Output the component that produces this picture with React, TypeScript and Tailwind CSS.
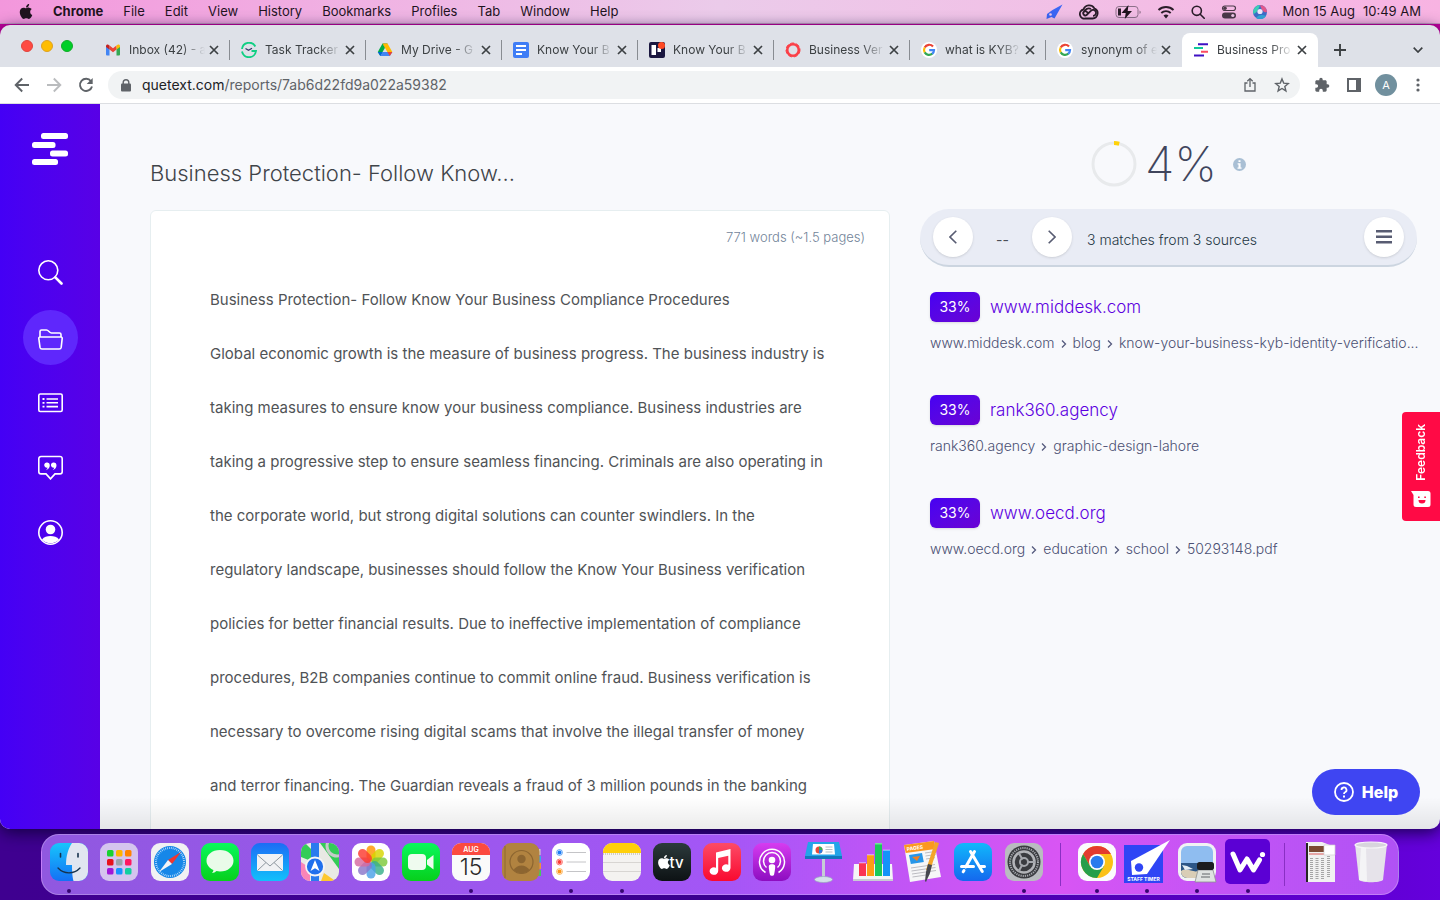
import type { ReactNode } from "react";

const MENU_ITEMS = ["File", "Edit", "View", "History", "Bookmarks", "Profiles", "Tab", "Window", "Help"];

const DOCUMENT_LINES = [
  "Business Protection- Follow Know Your Business Compliance Procedures",
  "Global economic growth is the measure of business progress. The business industry is",
  "taking measures to ensure know your business compliance. Business industries are",
  "taking a progressive step to ensure seamless financing. Criminals are also operating in",
  "the corporate world, but strong digital solutions can counter swindlers. In the",
  "regulatory landscape, businesses should follow the Know Your Business verification",
  "policies for better financial results. Due to ineffective implementation of compliance",
  "procedures, B2B companies continue to commit online fraud. Business verification is",
  "necessary to overcome rising digital scams that involve the illegal transfer of money",
  "and terror financing. The Guardian reveals a fraud of 3 million pounds in the banking",
];

interface Source {
  percent: string;
  site: string;
  path: string[];
}

const SOURCES: Source[] = [
  {
    percent: "33%",
    site: "www.middesk.com",
    path: ["www.middesk.com", "blog", "know-your-business-kyb-identity-verificatio..."],
  },
  { percent: "33%", site: "rank360.agency", path: ["rank360.agency", "graphic-design-lahore"] },
  { percent: "33%", site: "www.oecd.org", path: ["www.oecd.org", "education", "school", "50293148.pdf"] },
];

/* ---------- menu bar ---------- */

function AppleLogo({ className }: { className: string }) {
  return (
    <svg viewBox="0 0 384 512" fill="currentColor" className={className} aria-hidden="true">
      <path d="M318.7 268.7c-.2-36.7 16.4-64.4 50-84.8-18.8-26.9-47.2-41.7-84.7-44.6-35.5-2.8-74.3 20.7-88.5 20.7-15 0-49.4-19.7-76.4-19.7C63.3 141.2 4 184.8 4 273.5q0 39.3 14.4 81.2c12.8 36.7 59 126.7 107.2 125.2 25.2-.6 43-17.9 75.8-17.9 31.8 0 48.3 17.9 76.4 17.9 48.6-.7 90.4-82.5 102.6-119.3-65.2-30.7-61.7-90-61.7-91.9zm-56.6-164.2c27.3-32.4 24.8-61.9 24-72.5-24.1 1.4-52 16.4-67.9 34.9-17.5 19.8-27.8 44.3-25.6 71.9 26.1 2 49.9-11.4 69.5-34.3z" />
    </svg>
  );
}

function MenuBar() {
  return (
    <header className="flex h-6 shrink-0 items-center justify-between border-b border-[#c69bc0] bg-linear-to-r from-[#f397dc] via-[#ebcbea] to-[#f8b3e2] px-[19px] text-[13px] text-[#1f141e]">
      <nav className="flex items-center gap-5">
        <AppleLogo className="h-[17px] w-[14px]" />
        <span className="font-bold">Chrome</span>
        {MENU_ITEMS.map((item) => (
          <span key={item}>{item}</span>
        ))}
      </nav>
      <div className="flex items-center gap-4">
        <svg viewBox="0 0 18 16" className="h-4 w-[18px]">
          <path d="M17.500.500 9.500 14.500l-3-1.500-5 2 .500-5 5.500-4z" fill="#3b66f5" />
          <circle cx="5.500" cy="10.500" r="1.300" fill="#efc9ea" />
        </svg>
        <svg viewBox="0 0 20 16" className="h-4 w-5" fill="none" stroke="#2a1d29">
          <path d="M6.500 14.500h7a5.300 5.300 0 0 0 1.800-10.200A6 6 0 0 0 4.500 5.500a4.600 4.600 0 0 0 2 9z" strokeWidth="1.800" />
          <path d="M14 11.800a3 3 0 1 0-2.200-5L7.600 11a2.100 2.100 0 1 1 .2-3.200l1 1M5 8a5 5 0 0 1 7-3" strokeWidth="1.800" />
        </svg>
        <svg viewBox="0 0 26 14" className="h-[14px] w-[26px]">
          <rect x="1" y="1.500" width="22" height="11" rx="3" fill="none" stroke="#8d718a" />
          <path d="M24.500 5.500v3.500c1-.4 1.200-1.200 1.200-1.700s-.2-1.400-1.200-1.800z" fill="#8d718a" />
          <path d="M3 3.500h3v7H3z" fill="#2a1d29" />
          <path d="M13.500 0 6.500 8h4.200L9.800 14l7.200-8h-4.300z" fill="#1f141e" />
        </svg>
        <svg viewBox="0 0 18 14" className="h-[14px] w-[18px]" fill="none" stroke="#2a1d29" strokeWidth="1.900">
          <path d="M1.500 5a10.800 10.800 0 0 1 15 0M4.300 8a6.800 6.800 0 0 1 9.400 0" />
          <path d="M9 13.500 6.500 10.600a3.700 3.700 0 0 1 5 0z" fill="#2a1d29" stroke="none" />
        </svg>
        <svg viewBox="0 0 14 14" className="size-[14px]" fill="none" stroke="#2a1d29" strokeWidth="1.600">
          <circle cx="5.800" cy="5.800" r="4.600" />
          <path d="m9.200 9.200 4 4" strokeLinecap="round" />
        </svg>
        <svg viewBox="0 0 16 14" className="h-[14px] w-4">
          <rect x="1.500" y="1" width="13" height="4.500" rx="2.250" fill="none" stroke="#4b3a49" strokeWidth="1.200" />
          <circle cx="4" cy="3.250" r="1.800" fill="#4b3a49" />
          <rect x="1" y="7.500" width="14" height="6" rx="3" fill="#4b3a49" />
          <circle cx="11.800" cy="10.500" r="1.600" fill="#efc9ea" />
        </svg>
        <svg viewBox="0 0 14 14" className="size-[14px]">
          <circle cx="7" cy="7" r="7" fill="#3d6fc9" />
          <path d="M7 0a7 7 0 0 0-6.500 9C3 8 5 6 7 0z" fill="#3ccfb4" />
          <path d="M7 0a7 7 0 0 1 7 7c-3 1-5-1-7-7z" fill="#e2568c" />
          <path d="M3 13c2-3 6-4 10-2a7 7 0 0 1-10 2z" fill="#33a9da" />
          <circle cx="7" cy="6.500" r="2.600" fill="#f3e9fb" />
        </svg>
        <span className="flex gap-2">
          <span>Mon 15 Aug</span>
          <span>10:49 AM</span>
        </span>
      </div>
    </header>
  );
}

/* ---------- browser chrome ---------- */

function GoogleIcon() {
  return (
    <svg viewBox="0 0 16 16" className="size-4 shrink-0">
      <circle cx="8" cy="8" r="8" fill="#fff" />
      <g fill="none" strokeWidth="2.200">
        <path d="M12 4.500A5 5 0 0 0 3.700 5.600" stroke="#ea4335" />
        <path d="M3.700 5.500a5 5 0 0 0 0 5" stroke="#fbbc05" />
        <path d="M3.700 10.400a5 5 0 0 0 7.600 1.300" stroke="#34a853" />
        <path d="M8.200 8.200H13a5 5 0 0 1-1.800 3.700" stroke="#4285f4" />
      </g>
    </svg>
  );
}

const TABS: { title: string; icon: ReactNode }[] = [
  {
    title: "Inbox (42) - a",
    icon: (
      <svg viewBox="0 0 16 16" className="size-4 shrink-0">
        <path d="M1 3.500 4.500 6v7.500H2a1 1 0 0 1-1-1z" fill="#4285f4" />
        <path d="M15 3.500 11.500 6v7.500H14a1 1 0 0 0 1-1z" fill="#34a853" />
        <path d="M4.500 3.500 8 6.200l3.500-2.700v4L8 10.200 4.500 7.500z" fill="#ea4335" />
        <path d="M1 4.200c0-1.700 1.700-2 2.600-1.300l.9.700v4L1 5z" fill="#c5221f" />
        <path d="M15 4.200c0-1.700-1.700-2-2.600-1.300l-.9.700v4L15 5z" fill="#fbbc04" />
      </svg>
    ),
  },
  {
    title: "Task Tracker",
    icon: (
      <svg viewBox="0 0 16 16" className="size-4 shrink-0" fill="none">
        <path d="M14.300 4.500A7.100 7.100 0 0 0 1 7" stroke="#10cf83" strokeWidth="1.900" />
        <path d="M1 9.500a7.100 7.100 0 0 0 14-.5h-4.500" stroke="#10cf83" strokeWidth="1.900" />
        <path d="m4.500 6.500 3 1.800 3.500-2" stroke="#38376b" strokeWidth="1.300" />
      </svg>
    ),
  },
  {
    title: "My Drive - G",
    icon: (
      <svg viewBox="0 0 16 16" className="size-4 shrink-0">
        <path d="M5.500 1.500h5L8 5.800z" fill="#188038" />
        <path d="M5.500 1.500 8 5.800 3.300 14 .8 10z" fill="#00ac47" />
        <path d="M10.500 1.500 15.300 10h-5L5.600 1.500z" fill="#ffba00" />
        <path d="M5.600 10h9.700l-2.500 4H3.300z" fill="#4285f4" />
        <path d="m.8 10 2.500 4 2.300-4z" fill="#0066da" />
        <path d="M10.300 10h5l-2.500 4z" fill="#ea4335" />
      </svg>
    ),
  },
  {
    title: "Know Your B",
    icon: (
      <svg viewBox="0 0 16 16" className="size-4 shrink-0">
        <rect width="16" height="16" rx="2" fill="#3f7df6" />
        <path d="M3 3h10v2H3zM3 7h10v2H3zM3 11h6v2H3z" fill="#fff" />
      </svg>
    ),
  },
  {
    title: "Know Your B",
    icon: (
      <svg viewBox="0 0 16 16" className="size-4 shrink-0">
        <rect width="16" height="16" rx="2" fill="#1b1740" />
        <path d="M2.500 3H7v10H2.500zM8.500 6h3.500v4H8.500z" fill="#fff" />
        <circle cx="12.500" cy="3.500" r="3.500" fill="#ff4a24" />
      </svg>
    ),
  },
  {
    title: "Business Ver",
    icon: (
      <svg viewBox="0 0 16 16" className="size-4 shrink-0" fill="none" stroke="#fb4048">
        <circle cx="8" cy="8" r="5.800" strokeWidth="2.600" />
        <circle cx="8" cy="8" r="7" strokeWidth="1" strokeDasharray="4 2" />
      </svg>
    ),
  },
  { title: "what is KYB?", icon: <GoogleIcon /> },
  { title: "synonym of e", icon: <GoogleIcon /> },
];

function CloseIcon() {
  return (
    <svg viewBox="0 0 10 10" className="size-[10px]" stroke="#3c4043" strokeWidth="1.700">
      <path d="m1 1 8 8M9 1 1 9" />
    </svg>
  );
}

function TabBody({ title, icon }: { title: string; icon: ReactNode }) {
  return (
    <>
      {icon}
      <span className="ml-2 min-w-0 flex-1 overflow-hidden mask-r-from-70% mask-r-to-100% whitespace-nowrap">{title}</span>
      <button type="button" aria-label={`Close ${title}`} className="ml-1">
        <CloseIcon />
      </button>
    </>
  );
}

function TabStrip() {
  return (
    <div className="flex h-[42px] shrink-0 items-end bg-[#dee1e8] text-xs text-[#3c4043]">
      <div className="flex h-[42px] w-[94px] shrink-0 items-center gap-2 pl-[21px]">
        <span className="size-3 rounded-full border border-[#e0443e] bg-[#ff4a42]" />
        <span className="size-3 rounded-full border border-[#dea123] bg-[#ffbd00]" />
        <span className="size-3 rounded-full border border-[#12ac28] bg-[#00cf28]" />
      </div>
      {TABS.map((tab, index) => (
        <div key={index} className="flex h-[34px] w-[136px] min-w-0 items-center pl-[11px]">
          <TabBody {...tab} />
          <span className={`ml-[10px] h-5 w-px ${index < TABS.length - 1 ? "bg-[#888c92]" : "bg-transparent"}`} />
        </div>
      ))}
      <div className="flex h-[34px] w-[136px] min-w-0 items-center rounded-t-lg bg-white px-[11px]">
        <TabBody
          title="Business Pro"
          icon={
            <svg viewBox="0 0 16 16" className="size-4 shrink-0">
              <path d="M5 1.200h10v2H5z" fill="#3f10c4" />
              <path d="M1 5h9v2H1z" fill="#10c79b" />
              <path d="M8 8.800h7v2H8z" fill="#fb4b5f" />
              <path d="M1 12.600h10v2H1z" fill="#3f10c4" />
            </svg>
          }
        />
      </div>
      <button type="button" aria-label="New tab" className="ml-4 flex h-[34px] items-center">
        <svg viewBox="0 0 12 12" className="size-3" stroke="#3c4043" strokeWidth="1.900">
          <path d="M6 0v12M0 6h12" />
        </svg>
      </button>
      <button type="button" aria-label="Search tabs" className="mr-[17px] ml-auto flex h-[34px] items-center">
        <svg viewBox="0 0 10 6" className="h-[6px] w-[10px]" fill="none" stroke="#3c4043" strokeWidth="1.700">
          <path d="m.7.7 4.300 4.300L9.300.7" />
        </svg>
      </button>
    </div>
  );
}

function Toolbar() {
  return (
    <div className="flex h-[37px] shrink-0 items-center border-b border-[#dcdee2] bg-white pr-5 pl-[14px]">
      <div className="flex shrink-0 gap-4">
        <button type="button" aria-label="Back">
          <svg viewBox="0 0 16 16" className="size-4" fill="none" stroke="#5f6368" strokeWidth="1.900">
            <path d="M15 8H2M8.200 1.500 1.700 8l6.500 6.500" />
          </svg>
        </button>
        <button type="button" aria-label="Forward">
          <svg viewBox="0 0 16 16" className="size-4" fill="none" stroke="#babcbe" strokeWidth="1.900">
            <path d="M1 8h13M7.800 1.500 14.300 8l-6.500 6.500" />
          </svg>
        </button>
        <button type="button" aria-label="Reload">
          <svg viewBox="0 0 16 16" className="size-4" fill="none" stroke="#5f6368" strokeWidth="1.900">
            <path d="M13 4.200A6.100 6.100 0 1 0 14 9.500" />
            <path d="M14.700 1v6H8.700z" fill="#5f6368" stroke="none" />
          </svg>
        </button>
      </div>
      <div className="ml-[14px] flex h-7 min-w-0 flex-1 items-center rounded-full bg-[#f1f3f4] pr-[10px] pl-[13px]">
        <svg viewBox="0 0 10 13" className="h-[13px] w-[10px]">
          <path d="M2.200 5.500V3.600a2.800 2.800 0 0 1 5.600 0v1.900" fill="none" stroke="#5f6368" strokeWidth="1.400" />
          <rect y="4.500" width="10" height="8" rx="1" fill="#5f6368" />
        </svg>
        <p className="ml-[11px] flex-1 truncate text-sm text-[#5f6368]">
          <span className="text-[#202124]">quetext.com</span>/reports/7ab6d22fd9a022a59382
        </p>
        <button type="button" aria-label="Share">
          <svg viewBox="0 0 14 16" className="h-4 w-[14px]" fill="none" stroke="#5f6368" strokeWidth="1.300">
            <path d="M4.500 6H2v8h10V6H9.500M7 10V2M4.300 4.300 7 1.600l2.700 2.700" />
          </svg>
        </button>
        <button type="button" aria-label="Bookmark" className="ml-[17px]">
          <svg viewBox="0 0 16 16" className="size-4" fill="none" stroke="#5f6368" strokeWidth="1.400">
            <path d="m8 1.900 1.700 4.200 4.600.4-3.500 3 1.100 4.400L8 11.500l-3.900 2.400 1.100-4.400-3.500-3 4.600-.4z" />
          </svg>
        </button>
      </div>
      <div className="flex shrink-0 items-center pl-[14px]">
        <button type="button" aria-label="Extensions">
          <svg viewBox="0 0 24 24" className="size-4" fill="#5f6368">
            <path d="M20.500 11H19V7c0-1.100-.9-2-2-2h-4V3.500a2.500 2.500 0 0 0-5 0V5H4c-1.100 0-2 .9-2 2v3.800h1.500a2.700 2.700 0 0 1 0 5.400H2V20c0 1.100.9 2 2 2h3.800v-1.500a2.700 2.700 0 0 1 5.400 0V22H17c1.100 0 2-.9 2-2v-4h1.500a2.500 2.500 0 0 0 0-5z" />
          </svg>
        </button>
        <button type="button" aria-label="Side panel" className="ml-[17px]">
          <svg viewBox="0 0 14 14" className="size-[14px]">
            <path d="M0 0h14v14H0zM2 2v10h7V2z" fill="#5f6368" fillRule="evenodd" />
          </svg>
        </button>
        <button type="button" aria-label="Profile" className="ml-[14px] size-[22px] rounded-full bg-[#71909e] text-[11px] text-white">
          A
        </button>
        <button type="button" aria-label="More" className="ml-[19px]">
          <svg viewBox="0 0 4 14" className="h-[14px] w-1" fill="#5f6368">
            <circle cx="2" cy="2" r="1.600" />
            <circle cx="2" cy="7" r="1.600" />
            <circle cx="2" cy="12" r="1.600" />
          </svg>
        </button>
      </div>
    </div>
  );
}

/* ---------- report page ---------- */

const NAV_ICONS: { label: string; icon: ReactNode; active?: boolean }[] = [
  {
    label: "Search",
    icon: (
      <>
        <circle cx="10.300" cy="10.300" r="9.500" />
        <path d="m17.300 17.300 6.200 6.200" strokeWidth="2.600" strokeLinecap="round" />
      </>
    ),
  },
  {
    label: "Folders",
    active: true,
    icon: (
      <>
        <path d="M2 12V6.500A1.500 1.500 0 0 1 3.500 5h5c2 0 3 3 5 3h8a1.500 1.500 0 0 1 1.500 1.500V12" />
        <path d="M2 12h21a1.200 1.200 0 0 1 1.200 1.400l-1 9a2 2 0 0 1-2 1.600H4a2 2 0 0 1-2-1.600l-1.200-9A1.200 1.200 0 0 1 2 12z" />
      </>
    ),
  },
  {
    label: "Reports",
    icon: (
      <>
        <rect x=".8" y="4" width="23.400" height="17.500" rx="1.500" />
        <path d="M8.500 9h11.500M8.500 12.800h11.500M8.500 16.600h11.500" />
        <path d="M4.500 9h2M4.500 12.800h2M4.500 16.600h2" strokeWidth="1.800" />
      </>
    ),
  },
  {
    label: "Citations",
    icon: (
      <>
        <path d="M3 1.500h19A2.200 2.200 0 0 1 24.200 3.700v13a2.200 2.200 0 0 1-2.200 2.200h-5l-4.500 5-4.500-5H3a2.200 2.200 0 0 1-2.200-2.200v-13A2.200 2.200 0 0 1 3 1.500z" />
        <path
          d="M9 7.500a2.600 2.600 0 1 0 .5 5.100c-.1 1-.7 1.800-1.600 2.600 2.700-.8 3.900-2.900 3.900-5.200A2.600 2.600 0 0 0 9 7.500zM15.700 7.500a2.600 2.600 0 1 0 .5 5.100c-.1 1-.7 1.800-1.600 2.600 2.700-.8 3.900-2.900 3.900-5.200a2.600 2.600 0 0 0-2.800-2.500z"
          fill="#fff"
          stroke="none"
        />
      </>
    ),
  },
  {
    label: "Account",
    icon: (
      <>
        <circle cx="12.500" cy="12.500" r="11.700" />
        <circle cx="12.500" cy="9.500" r="4.800" fill="#fff" stroke="none" />
        <path d="M4 19.500c2-2.600 5-3.500 8.500-3.500s6.500.9 8.500 3.500a11.500 11.500 0 0 1-17 0z" fill="#fff" stroke="none" />
      </>
    ),
  },
];

function Sidebar() {
  return (
    <aside className="flex w-[100px] shrink-0 flex-col items-center bg-linear-to-r from-[#4400f5] to-[#5800e6] pt-[29px]">
      <svg viewBox="0 0 36 32" className="h-8 w-9" fill="#fff">
        <rect x="9" width="27" height="6" rx="2.500" />
        <rect y="9" width="23.500" height="6" rx="2.500" />
        <rect x="18" y="17.500" width="18" height="6" rx="2.500" />
        <rect y="26" width="26" height="6" rx="2.500" />
      </svg>
      <nav className="mt-20 flex flex-col gap-[10px]">
        {NAV_ICONS.map(({ label, icon, active }) => (
          <button
            key={label}
            type="button"
            aria-label={label}
            className={`flex size-[55px] items-center justify-center rounded-full ${active ? "bg-[#5f27fc]" : ""}`}
          >
            <svg viewBox="0 0 25 25" className="size-[25px]" fill="none" stroke="#fff" strokeWidth="1.600">
              {icon}
            </svg>
          </button>
        ))}
      </nav>
    </aside>
  );
}

function DocumentColumn() {
  return (
    <section className="min-w-0 pt-[53px]">
      <h1 className="truncate text-[22px] leading-8 font-light text-[#3f4449]">Business Protection- Follow Know...</h1>
      <article className="mt-[21px] rounded-md border border-[#e6eef0] bg-white pt-4 pb-10">
        <p className="pr-6 text-right text-[13px] leading-5 font-light text-[#728499]">771 words (~1.5 pages)</p>
        <div className="mt-[26px] pl-[59px] text-[15px] leading-[54px] whitespace-nowrap text-[#505356]">
          {DOCUMENT_LINES.map((line) => (
            <p key={line}>{line}</p>
          ))}
        </div>
      </article>
    </section>
  );
}

function SourceItem({ percent, site, path }: Source) {
  return (
    <li>
      <div className="flex items-center gap-[10px]">
        <span className="flex h-[30px] w-[50px] items-center justify-center rounded-md bg-linear-to-br from-[#4600f2] to-[#6a00d4] text-sm text-white shadow-sm">
          {percent}
        </span>
        <a href="#source" className="text-[17px] leading-7 font-light text-[#5c00e0]">
          {site}
        </a>
      </div>
      <p className="mt-[11px] text-sm font-light whitespace-nowrap text-[#4b5073]">
        {path.map((part, index) => (
          <span key={part}>
            {index > 0 ? (
              <svg viewBox="0 0 6 8" className="mx-[6px] mb-px inline h-2 w-[6px]" fill="none" stroke="#555a7d" strokeWidth="1.300">
                <path d="m1 .5 3.500 3.500L1 7.500" />
              </svg>
            ) : null}
            {part}
          </span>
        ))}
      </p>
    </li>
  );
}

const ROUND_BUTTON = "flex size-10 shrink-0 items-center justify-center rounded-full bg-white shadow-sm";

function MatchesColumn() {
  return (
    <section className="min-w-0 pt-[30px]">
      <div className="flex h-[60px] items-center justify-center">
        <svg viewBox="0 0 46 46" className="size-[46px]" fill="none" strokeWidth="3">
          <circle cx="23" cy="23" r="21" stroke="#e8eaec" />
          <path d="M23 2a21 21 0 0 1 5.200.7" stroke="#ffd20a" strokeWidth="4" />
        </svg>
        <p className="ml-2 text-5xl leading-[60px] font-extralight text-[#40455c]">4%</p>
        <svg viewBox="0 0 13 13" className="ml-4 size-[13px]">
          <circle cx="6.500" cy="6.500" r="6.500" fill="#a9bfd4" />
          <path d="M5.500 2.200h2v1.900h-2zM4.600 5.200h3v4.200h1v1.300H4.500V9.400h1V6.500h-.9z" fill="#fff" />
        </svg>
      </div>
      <div className="mt-[15px] flex h-[58px] items-center rounded-full border-b-2 border-[#ccd5e0] bg-[#e9ecf5] px-[13px] text-sm">
        <button type="button" aria-label="Previous match" className={ROUND_BUTTON}>
          <svg viewBox="0 0 8 14" className="h-[14px] w-2" fill="none" stroke="#585c72" strokeWidth="1.600">
            <path d="M7.300.7 1 7l6.300 6.300" />
          </svg>
        </button>
        <span className="w-[59px] pt-[6px] text-center text-[#4b4f57]">--</span>
        <button type="button" aria-label="Next match" className={ROUND_BUTTON}>
          <svg viewBox="0 0 8 14" className="h-[14px] w-2" fill="none" stroke="#585c72" strokeWidth="1.600">
            <path d="M.7.7 7 7 .7 13.300" />
          </svg>
        </button>
        <span className="ml-[15px] flex-1 pt-[6px] font-light text-[#243744]">3 matches from 3 sources</span>
        <button type="button" aria-label="Menu" className={ROUND_BUTTON}>
          <svg viewBox="0 0 16 14" className="h-[14px] w-4" fill="#585c72">
            <path d="M0 0h16v2.500H0zM0 5.500h16V8H0zM0 11h16v2.500H0z" />
          </svg>
        </button>
      </div>
      <ul className="mt-[25px] flex flex-col gap-[42px] pl-[10px]">
        {SOURCES.map((source) => (
          <SourceItem key={source.site} {...source} />
        ))}
      </ul>
    </section>
  );
}

function ReportPage() {
  return (
    <div className="relative flex min-h-0 flex-1 overflow-hidden bg-[#f8f9fc]">
      <Sidebar />
      <main className="grid min-w-0 flex-1 grid-cols-[minmax(0,740fr)_minmax(0,497fr)] gap-[30px] overflow-hidden pr-[23px] pl-[50px]">
        <DocumentColumn />
        <MatchesColumn />
      </main>
      <div className="pointer-events-none absolute right-0 bottom-0 left-[100px] h-8 bg-linear-to-b from-transparent to-black/8" />
      <button
        type="button"
        className="absolute top-[308px] right-0 flex h-[109px] w-[38px] flex-col items-center justify-between rounded-l-sm bg-[#ff0a45] pt-3 pb-[14px] text-xs font-semibold text-white"
      >
        <span className="rotate-180 [writing-mode:vertical-rl]">Feedback</span>
        <svg viewBox="0 0 20 16" className="h-4 w-5">
          <path d="M0 0h17a2.500 2.500 0 0 1 2.500 2.500v11A2.500 2.500 0 0 1 17 16H5a2.500 2.500 0 0 1-2.500-2.500V4z" fill="#fff" />
          <path d="M7 5.500h1.600v1.600H7zM13.300 5.500h1.600v1.600h-1.600zM7.500 9h7a3.500 3.500 0 0 1-7 0z" fill="#ff0a45" />
        </svg>
      </button>
      <button
        type="button"
        className="absolute right-5 bottom-[14px] flex h-[46px] w-[108px] items-center justify-center gap-2 rounded-full bg-[#3f45f2] text-base font-extrabold text-white"
      >
        <svg viewBox="0 0 20 20" className="size-5" fill="none" stroke="#fff" strokeWidth="1.800">
          <circle cx="10" cy="10" r="9" />
          <path d="M7.500 8a2.500 2.500 0 1 1 3.600 2.200c-.8.400-1.100.8-1.100 1.700" />
          <path d="M9 13.500h2v2H9z" fill="#fff" stroke="none" />
        </svg>
        Help
      </button>
    </div>
  );
}

/* ---------- dock ---------- */

function Tile({ fill }: { fill: string }) {
  return <rect width="38" height="38" rx="9" fill={fill} />;
}

interface DockApp {
  name: string;
  running?: boolean;
  art: ReactNode;
}

const LAUNCHPAD_COLORS = [
  "#19d22e", "#ffb300", "#ff8300",
  "#e8101c", "#9aa3ab", "#ff1760",
  "#a017d8", "#1793ff", "#13cfa0",
];

const PETAL_COLORS = ["#ff9500", "#d8d600", "#7dc93a", "#38b08a", "#4ba1e8", "#8a76c9", "#d66aa0", "#fb3b30"];

const DOCK_MAIN: DockApp[] = [
  {
    name: "Finder",
    running: true,
    art: (
      <>
        <Tile fill="url(#finder)" />
        <path d="M22 0h7a9 9 0 0 1 9 9v20a9 9 0 0 1-9 9h-5.500c-1-4-1.500-8-1.500-16h-6c0-9 2-16 6-22z" fill="#e1e6f0" />
        <path d="M10.500 10.500v3.500M28 10.500v3.500" stroke="#17324d" strokeWidth="1.600" strokeLinecap="round" />
        <path d="M8 25c6 6.500 16 6.500 22 0" fill="none" stroke="#17324d" strokeWidth="1.300" strokeLinecap="round" />
      </>
    ),
  },
  {
    name: "Launchpad",
    art: (
      <>
        <Tile fill="#d5c4ee" />
        {LAUNCHPAD_COLORS.map((color, i) => (
          <rect key={color} x={7 + (i % 3) * 9} y={7 + Math.floor(i / 3) * 9} width="6.500" height="6.500" rx="1.500" fill={color} />
        ))}
      </>
    ),
  },
  {
    name: "Safari",
    art: (
      <>
        <Tile fill="#f1f1f3" />
        <circle cx="19" cy="19" r="16" fill="#1687e8" />
        <circle cx="19" cy="19" r="14" fill="none" stroke="#cfe9ff" strokeWidth="2" strokeDasharray=".7 1.200" />
        <path d="m30 9-9 12-4-4z" fill="#f2362f" />
        <path d="M8 29 17 17l4 4z" fill="#f5f5f7" />
      </>
    ),
  },
  {
    name: "Messages",
    art: (
      <>
        <Tile fill="url(#green)" />
        <path d="M19 7c8 0 13.500 4.800 13.500 10.700S27 28.500 19 28.500c-1.200 0-2.500-.2-3.500-.4-1.200 1.200-2.900 2-4.700 2 .9-.9 1.500-2 1.600-3.200C8 25 5.500 21.600 5.500 17.700 5.500 11.800 11 7 19 7z" fill="#e9fbe9" />
      </>
    ),
  },
  {
    name: "Mail",
    art: (
      <>
        <Tile fill="url(#mail)" />
        <rect x="6" y="11" width="26" height="17" rx="1.500" fill="#f1f2f4" />
        <path d="m6.500 12 12.500 11L31.500 12M6.500 27.500l8.500-8M31.500 27.500l-8.500-8" fill="none" stroke="#8e979f" />
      </>
    ),
  },
  {
    name: "Maps",
    art: (
      <>
        <Tile fill="#e9e9e4" />
        <path d="M19 0h10a9 9 0 0 1 9 9v17z" fill="#34cc57" />
        <path d="M0 9a9 9 0 0 1 5-8l5 5v12L0 14z" fill="#34cc57" />
        <path d="M0 19l9 6v13a9 9 0 0 1-9-9z" fill="#fa85b8" />
        <path d="m20 38 3-8 10 7a9 9 0 0 1-4 1z" fill="#fdc82e" />
        <path d="M10 0h8v38h-8z" fill="#2a7bee" />
        <circle cx="36" cy="3" r="10" fill="none" stroke="#c6cbc8" strokeWidth="3" clipPath="url(#tile)" />
        <circle cx="14" cy="23.500" r="9" fill="#2070ed" stroke="#f4f5f7" strokeWidth="1.800" />
        <path d="m14 17 4.500 11-4.500-2.700L9.500 28z" fill="#fff" />
      </>
    ),
  },
  {
    name: "Photos",
    art: (
      <>
        <Tile fill="#fff" />
        {PETAL_COLORS.map((color, i) => (
          <rect key={color} x="14.500" y="2.500" width="9" height="16" rx="4.500" fill={color} opacity=".82" transform={`rotate(${i * 45} 19 19)`} />
        ))}
      </>
    ),
  },
  {
    name: "FaceTime",
    art: (
      <>
        <Tile fill="url(#green)" />
        <rect x="6" y="11" width="18" height="16" rx="4" fill="#effbef" />
        <path d="m25 17 6.500-5v14.500L25 21.500z" fill="#effbef" />
      </>
    ),
  },
  {
    name: "Calendar",
    running: true,
    art: (
      <>
        <Tile fill="#fafafa" />
        <path d="M9 0h20a9 9 0 0 1 9 9v3H0V9a9 9 0 0 1 9-9z" fill="#fb4a40" />
        <text x="19" y="9" fontSize="7" fontWeight="600" textAnchor="middle" fill="#fff">AUG</text>
        <text x="19" y="32" fontSize="23" fontWeight="300" textAnchor="middle" fill="#2b2b2b">15</text>
      </>
    ),
  },
  {
    name: "Contacts",
    art: (
      <>
        <path d="M30 6h8.500v6H30z" fill="#d9d5ce" />
        <path d="M30 13h9v6h-9z" fill="#39a9ea" />
        <path d="M30 20h9v6h-9z" fill="#f0923b" />
        <path d="M30 27h9v6h-9z" fill="#46c95c" />
        <rect width="37.500" height="38" rx="9" fill="#b18340" />
        <path d="M3 3v32" stroke="#8f682f" />
        <circle cx="19.500" cy="19" r="11.500" fill="none" stroke="#8c6530" strokeWidth="1.200" />
        <circle cx="19.500" cy="16" r="4.200" fill="#8c6530" />
        <path d="M11.500 27a9.500 9.500 0 0 1 16 0 11.500 11.500 0 0 1-16 0z" fill="#8c6530" />
      </>
    ),
  },
  {
    name: "Reminders",
    running: true,
    art: (
      <>
        <Tile fill="#fff" />
        {["#1b7cf4", "#fa3a33", "#fb9518"].map((color, i) => (
          <g key={color}>
            <circle cx="7.500" cy={9.5 + i * 9.5} r="2.900" fill="none" stroke={color} strokeWidth=".7" />
            <circle cx="7.500" cy={9.5 + i * 9.5} r="2" fill={color} />
            <path d={`M14.500 ${9.5 + i * 9.5}h19.500`} stroke="#c4c4c7" />
          </g>
        ))}
      </>
    ),
  },
  {
    name: "Notes",
    running: true,
    art: (
      <>
        <Tile fill="#f4f2f0" />
        <path d="M9 0h20a9 9 0 0 1 9 9v1H0V9a9 9 0 0 1 9-9z" fill="#ffcf0a" />
        <path d="M0 11h38" stroke="#b0a890" strokeDasharray="1 1" />
        <path d="M0 19.500h38M0 28.500h38" stroke="#d0cdca" strokeWidth=".8" />
      </>
    ),
  },
  {
    name: "TV",
    art: (
      <>
        <Tile fill="url(#tv)" />
        <path
          transform="translate(5 11) scale(.031)"
          d="M318.700 268.700c-.2-36.700 16.400-64.400 50-84.800-18.800-26.900-47.200-41.700-84.700-44.600-35.500-2.800-74.300 20.700-88.500 20.700-15 0-49.400-19.700-76.400-19.700C63.300 141.200 4 184.800 4 273.500q0 39.300 14.400 81.200c12.800 36.700 59 126.700 107.200 125.200 25.200-.6 43-17.900 75.800-17.900 31.800 0 48.300 17.900 76.400 17.900 48.600-.7 90.400-82.500 102.600-119.300-65.200-30.700-61.700-90-61.700-91.900zm-56.600-164.200c27.300-32.400 24.800-61.900 24-72.500-24.100 1.400-52 16.400-67.900 34.900-17.500 19.800-27.800 44.300-25.600 71.900 26.100 2 49.900-11.400 69.500-34.300z"
          fill="#fff"
        />
        <text x="16.500" y="25" fontSize="15" fontWeight="500" fill="#fff">tv</text>
      </>
    ),
  },
  {
    name: "Music",
    art: (
      <>
        <Tile fill="url(#music)" />
        <path d="M13 9.500 27.500 6v19a4.300 3.800 0 1 1-2.200-3.300v-9L15.200 15v13a4.300 3.800 0 1 1-2.200-3.300z" fill="#fff" />
      </>
    ),
  },
  {
    name: "Podcasts",
    art: (
      <>
        <Tile fill="url(#podcasts)" />
        <g fill="none" stroke="#fff" strokeWidth="1.500">
          <path d="M12.500 29.500a12.500 12.500 0 1 1 13 0" />
          <path d="M13.500 24.500a8.500 8.500 0 1 1 11 0" />
        </g>
        <circle cx="19" cy="17" r="3.300" fill="#fff" />
        <path d="M15.800 23c0-2.500 6.400-2.500 6.400 0 0 3-.7 7-1.200 8.700-.5 1.500-3.500 1.500-4 0-.5-1.700-1.200-5.700-1.200-8.700z" fill="#fff" />
      </>
    ),
  },
  {
    name: "Keynote",
    art: (
      <>
        <path d="M18 14h3v22h-3z" fill="#c6ccd6" />
        <ellipse cx="19.500" cy="36.500" rx="9" ry="3" fill="#d4e0ea" stroke="#98a9bb" strokeWidth=".7" />
        <path d="M4-1h31l3 14H1z" fill="#23a4e8" />
        <path d="M1 13h37v3H1z" fill="#1377bd" />
        <path d="M9 1h21l1 10.500H8z" fill="#fff" />
        <circle cx="15" cy="7" r="3.500" fill="#e84a3a" />
        <path d="M15 7V3.500A3.500 3.500 0 0 1 18.500 7z" fill="#2eb35a" />
        <path d="M15 7h3.500A3.500 3.500 0 0 1 15 10.500z" fill="#2a7ee0" />
        <path d="M21.500 4h7M21.500 6.500h7M21.500 9h7" stroke="#b8bec5" />
      </>
    ),
  },
  {
    name: "Numbers",
    art: (
      <>
        <path d="M0 21h38l1 16H-1z" fill="#f4f4f6" />
        <path d="M-1 36h40v2H-1z" fill="#c9cbd3" />
        <path d="M5 20h7v13H5z" fill="#fb3353" />
        <path d="M13 12h7v21h-7z" fill="#fd9d16" />
        <path d="M21 0h7v33h-7z" fill="#1bc95a" />
        <path d="M29 7h7v26h-7z" fill="#1493f9" />
        <path d="M5 19h7v1.500H5zM13 11h7v1.500h-7zM21 0h7v1.500h-7zM29 6.500h7V8h-7z" fill="#fff" opacity=".4" />
      </>
    ),
  },
  {
    name: "Pages",
    art: (
      <>
        <path d="m0 2 30-4 7 36-31 5z" fill="#f6f6f7" />
        <path d="m0 2 30-4 1.500 8L1.700 10z" fill="#fb9820" />
        <text x="3" y="8" fontSize="5" fontWeight="700" fill="#fff" transform="rotate(-8 3 8)">PAGES</text>
        <path d="m5 12 13-2 1.800 9-13 2z" fill="#2696e8" />
        <path d="m8 14 8-1-3 5z" fill="#f07f20" />
        <path d="m21 10 10-1.500M21.500 13l10-1.500M22 16l9-1.300M7 25l24-3.500M7.500 28l24-3.500M8 31l24-3.500M8.500 34l17-2.500" stroke="#b6b6bb" strokeWidth=".9" />
        <path d="m31-1 4 1-9 28-4-1z" fill="#f3a52b" />
        <path d="m24 21 4 1-2 8-4 9-1-1 1-9z" fill="#45474f" />
      </>
    ),
  },
  {
    name: "App Store",
    art: (
      <>
        <Tile fill="url(#store)" />
        <g stroke="#fff" strokeWidth="3" strokeLinecap="round">
          <path d="m20.500 8.500-8.800 15.500M16.500 8.500l11.800 20M7.500 23.500h12M26 23.500h4.500M10 27.500l-.8 1.300" />
        </g>
      </>
    ),
  },
  {
    name: "System Preferences",
    running: true,
    art: (
      <>
        <Tile fill="#b9bcc0" />
        <circle cx="19" cy="19" r="16.500" fill="#3a3c40" />
        <circle cx="19" cy="19" r="14" fill="none" stroke="#a5a8ad" strokeWidth="2" strokeDasharray="1.200 1" />
        <circle cx="19" cy="19" r="10.500" fill="none" stroke="#b2b4b8" strokeWidth="2.500" />
        <circle cx="19" cy="19" r="4" fill="none" stroke="#a5a8ad" strokeWidth="2" />
        <path d="M22 19h8M17.500 16.500l-4-7M17.500 21.500l-4 7" stroke="#a5a8ad" strokeWidth="2" />
      </>
    ),
  },
];

const DOCK_RECENT: DockApp[] = [
  {
    name: "Chrome",
    running: true,
    art: (
      <>
        <Tile fill="#fbfbfc" />
        <circle cx="19" cy="19" r="16" fill="#fbc116" />
        <path d="M5.100 11A16 16 0 0 1 32.900 11H19l-7 12z" fill="#e33b2e" />
        <path d="M5.100 11A16 16 0 0 0 19 35l7-12H12z" fill="#269e4b" />
        <circle cx="19" cy="19" r="8" fill="#fff" />
        <circle cx="19" cy="19" r="6.300" fill="#2a7bee" />
      </>
    ),
  },
  {
    name: "Staff Timer",
    running: true,
    art: (
      <>
        <rect x="-4" y="2" width="39" height="38" fill="#2f45f5" />
        <path d="M42-3 19 31l-15 1-1-14z" fill="#fff" />
        <circle cx="11" cy="24.500" r="4.200" fill="#2f45f5" />
        <text x="15.500" y="38" fontSize="5" fontWeight="700" textAnchor="middle" fill="#fff">STAFF TIMER</text>
      </>
    ),
  },
  {
    name: "Preview",
    running: true,
    art: (
      <>
        <Tile fill="#f1f2f4" />
        <rect x="3" y="3" width="32" height="32" rx="6" fill="#8fbdf0" />
        <path d="M3 20h32v9a6 6 0 0 1-6 6H9a6 6 0 0 1-6-6z" fill="#2c5687" />
        <path d="M3 28c6-4 12 2 17 0v7H9a6 6 0 0 1-6-6z" fill="#d9cdb6" />
        <path d="m4 22 5 1 6 3-8 1z" fill="#e3edf5" />
        <path d="M20 27h15l3 12H17z" fill="#dfe2e1" stroke="#8c8f90" strokeWidth=".8" />
        <rect x="19" y="19" width="17" height="8" rx="2.500" fill="#1c1d20" />
        <path d="M24 31h8M23 34h9" stroke="#616468" />
      </>
    ),
  },
  {
    name: "Wi",
    running: true,
    art: (
      <>
        <rect x="-4" y="-4" width="45" height="45" rx="5" fill="#5b00d4" />
        <path d="m4 11 7 16 7-11 6.500 11 6-10" fill="none" stroke="#fff" strokeWidth="5" strokeLinecap="round" strokeLinejoin="round" />
        <circle cx="33.500" cy="11.500" r="2.600" fill="#fff" />
      </>
    ),
  },
];

const DOCK_FILES: DockApp[] = [
  {
    name: "Documents",
    art: (
      <>
        <path d="M4-1h16l13 5v35H4z" fill="#f1f1f1" />
        <path d="M4 0h2v39H4z" fill="#252422" />
        <path d="M7 3h15v6H7z" fill="#7b4a32" />
        <path d="M7 10h15v2H7z" fill="#e7a6a6" />
        <path d="M9.500 15v21M15 15v21M20.500 15v21M26.500 13v21" stroke="#a6a6a6" strokeWidth="3" strokeDasharray="1 1" />
        <path d="M22 2h11v10H22z" fill="#fff" stroke="#d0d0d0" strokeWidth=".7" />
      </>
    ),
  },
  {
    name: "Trash",
    art: (
      <>
        <path d="M3 1h32l-4 36c-3 3-21 3-24 0z" fill="#e6e3ea" />
        <path d="M9 4h5l1 34c-4 0-6-.5-8-1z" fill="#f8f7f9" opacity=".8" />
        <ellipse cx="19" cy="2" rx="16" ry="3" fill="#d8d5dd" stroke="#f7f7f8" strokeWidth="1.200" />
      </>
    ),
  },
];

function DockItems({ apps }: { apps: DockApp[] }) {
  return apps.map((app) => (
    <button key={app.name} type="button" aria-label={app.name} className="flex flex-1 flex-col items-center pt-2">
      <svg viewBox="0 0 38 38" className="size-[38px] overflow-visible">
        {app.art}
      </svg>
      {app.running ? <span className="mt-2 size-1 rounded-full bg-[#35066f]" /> : null}
    </button>
  ));
}

function DockDivider() {
  return (
    <div className="flex w-[23px] shrink-0 justify-center py-2">
      <span className="w-px bg-[#8a2fc4]" />
    </div>
  );
}

const GRADIENTS = [
  { id: "finder", from: "#17c5fb", to: "#1471f5" },
  { id: "green", from: "#09f85c", to: "#07cf1c" },
  { id: "mail", from: "#1d6cf5", to: "#12c1fb" },
  { id: "tv", from: "#2c3a3c", to: "#0d1214" },
  { id: "music", from: "#fd4b66", to: "#f90a30" },
  { id: "podcasts", from: "#d63cf0", to: "#8d0dc0" },
  { id: "store", from: "#11b8fb", to: "#1468ee" },
];

function Dock() {
  return (
    <footer className="shrink-0 px-[41px] py-[5px]">
      <svg className="absolute size-0" aria-hidden="true">
        <defs>
          {GRADIENTS.map(({ id, from, to }) => (
            <linearGradient key={id} id={id} x1="0" y1="0" x2="0" y2="1">
              <stop offset="0" stopColor={from} />
              <stop offset="1" stopColor={to} />
            </linearGradient>
          ))}
          <clipPath id="tile">
            <rect width="38" height="38" rx="9" />
          </clipPath>
        </defs>
      </svg>
      <div className="flex h-[61px] rounded-[18px] border border-white/25 bg-linear-to-r from-[#9058e0] via-[#a556f8] via-55% to-[#b052f5]">
        <div className="flex flex-1 rounded-[18px] bg-linear-to-r from-transparent from-50% via-[#d855f4] via-75% to-transparent px-[2px]">
          <DockItems apps={DOCK_MAIN} />
          <DockDivider />
          <DockItems apps={DOCK_RECENT} />
          <DockDivider />
          <DockItems apps={DOCK_FILES} />
        </div>
      </div>
    </footer>
  );
}

export default function App() {
  return (
    <div className="flex h-screen flex-col overflow-hidden bg-linear-to-r from-[#3f0090] via-[#3b0091] to-[#6500dc] font-['Inter',sans-serif]">
      <MenuBar />
      <div className="flex min-h-0 flex-1 flex-col bg-linear-to-b from-[#c2009c] from-10% to-transparent to-20% pt-px">
        <div className="flex min-h-0 flex-1 flex-col overflow-hidden rounded-[10px] shadow-[0_4px_16px_rgba(10,0,50,0.8)]">
          <TabStrip />
          <Toolbar />
          <ReportPage />
        </div>
      </div>
      <Dock />
    </div>
  );
}
